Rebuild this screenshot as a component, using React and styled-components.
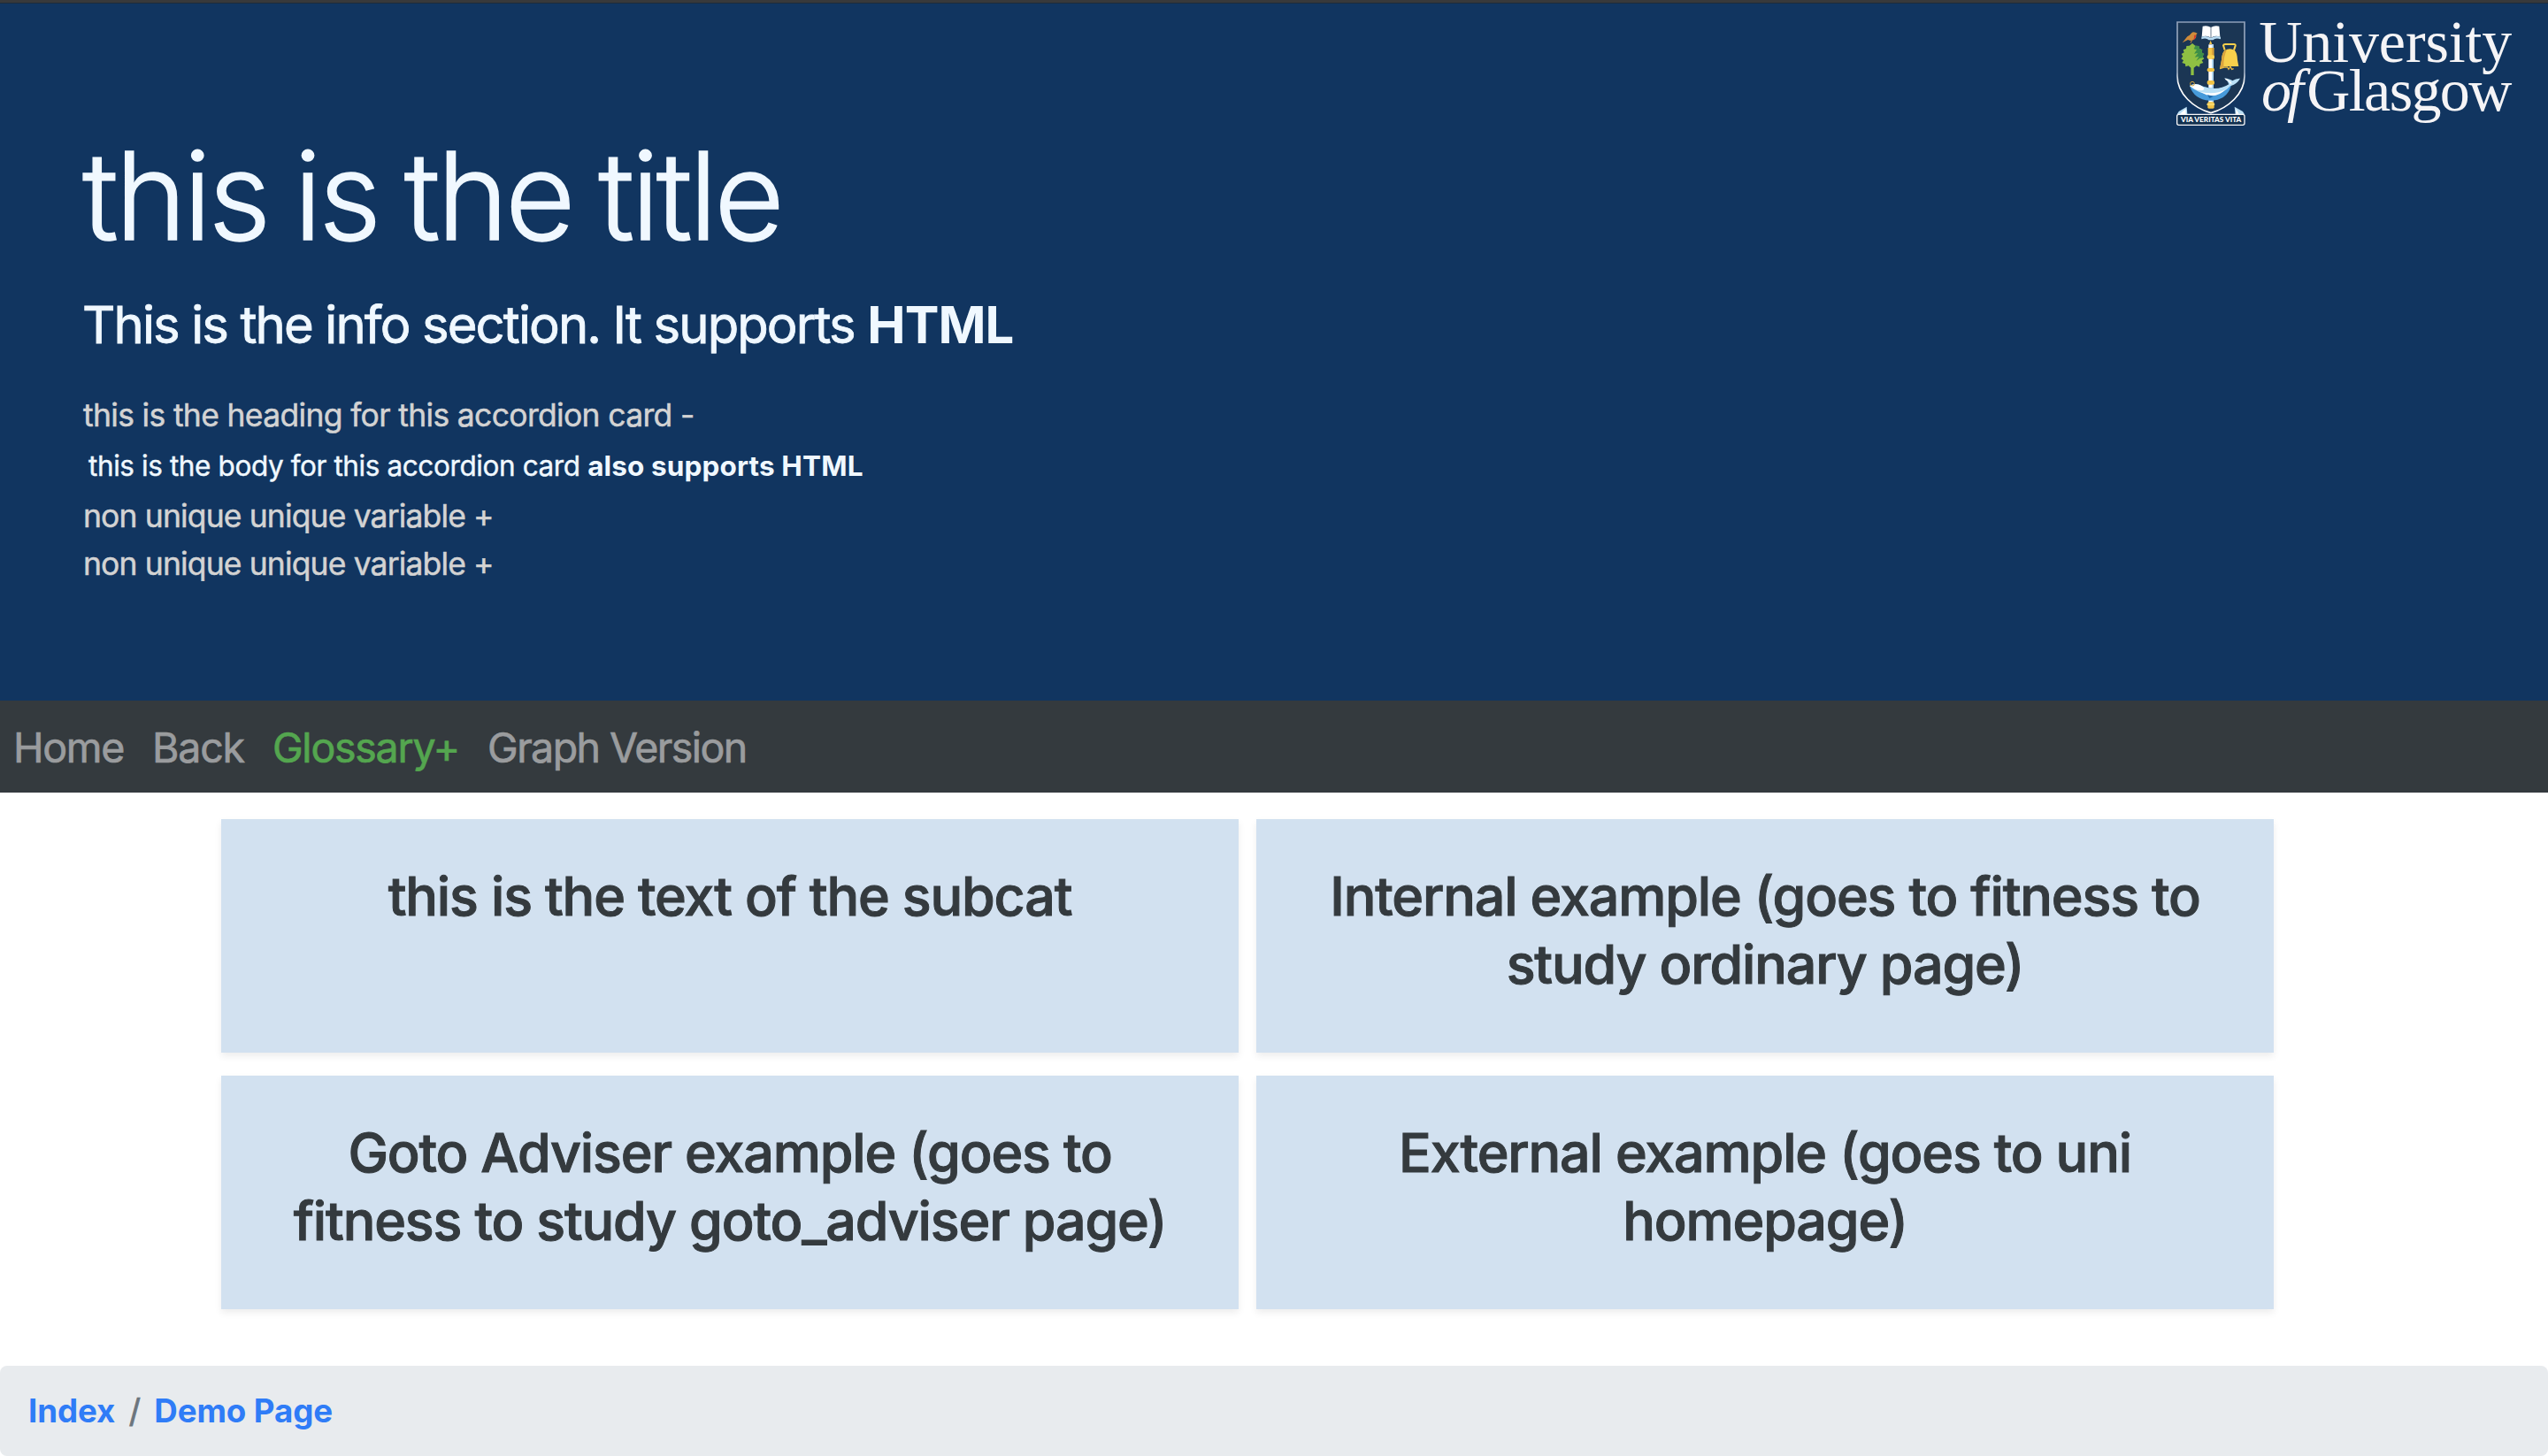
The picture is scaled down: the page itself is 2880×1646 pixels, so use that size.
import React from "react";
import styled, { createGlobalStyle } from "styled-components";

const GlobalStyle = createGlobalStyle`
  * { box-sizing: border-box; }
  body {
    margin: 0;
    background: #fff;
    font-family: Inter, "Liberation Sans", sans-serif;
    color: #343a3e;
  }
  h1, h2, p { margin: 0; }
`;

const Page = styled.div`
  display: flex;
  flex-direction: column;
  height: 1646px;
  overflow: hidden;
`;

const WindowEdge = styled.div`
  flex: none;
  height: 4px;
  background: #38393b;
  border-bottom: 1px solid #1e2b3a;
`;

const Header = styled.header`
  flex: none;
  display: flex;
  justify-content: space-between;
  align-items: flex-start;
  height: 788px;
  background: #113560;
  color: #f0f8ff;
`;

const Intro = styled.div`
  padding: 135px 0 0 93px;
`;

const Title = styled.h1`
  font-size: 137px;
  font-weight: 300;
  -webkit-text-stroke: 1.4px currentColor;
  line-height: 165px;
  letter-spacing: -3.65px;
  word-spacing: -5.5px;
`;

const Info = styled.p`
  margin-top: 24px;
  font-size: 58px;
  -webkit-text-stroke: 0.8px currentColor;
  line-height: 78px;
  letter-spacing: -1.9px;

  strong {
    letter-spacing: -0.9px;
    -webkit-text-stroke: 0;
  }
`;

const Accordion = styled.div`
  margin-top: 37px;
  padding-left: 1px;
`;

const CardHeading = styled.p`
  font-size: 35.5px;
  -webkit-text-stroke: 0.5px currentColor;
  line-height: 54px;
  letter-spacing: ${(p) => (p.$open ? "-0.67px" : "-0.86px")};
  color: #d3d3d3;
`;

const CardBody = styled.p`
  padding-left: 6px;
  font-size: 31.5px;
  -webkit-text-stroke: 0.4px currentColor;
  line-height: 60px;
  letter-spacing: -0.4px;

  strong {
    letter-spacing: 0.13px;
    -webkit-text-stroke: 0;
  }
`;

const LogoSvg = styled.svg`
  flex: none;
  width: 388px;
  height: 126px;
  margin: 16px 36px 0 0;
  overflow: visible;
`;

const Nav = styled.nav`
  flex: none;
  display: flex;
  height: 104px;
  padding: 1px 0 0 15px;
  gap: 32px;
  background: #343a3e;
  line-height: 104px;
  font-size: 46.5px;
`;

const NavLink = styled.span`
  color: ${(p) => (p.$accent ? "#54a64f" : "#9a9c9e")};
  -webkit-text-stroke: 0.7px currentColor;
  letter-spacing: ${(p) => p.$track}px;
`;

const Main = styled.main`
  flex: 1;
  display: grid;
  grid-template-columns: 1150px 1150px;
  grid-auto-rows: 264px;
  gap: 26px 20px;
  padding: 30px 0 0 250px;
`;

const Tile = styled.div`
  padding: 49px 64px 0;
  background: #d2e1f0;
  box-shadow: 0 4px 8px rgba(0, 0, 0, 0.075);
  text-align: center;
`;

const TileTitle = styled.h2`
  font-size: 61px;
  font-weight: 500;
  -webkit-text-stroke: 1px currentColor;
  line-height: 76.8px;
  letter-spacing: -1.15px;
`;

const Breadcrumb = styled.footer`
  flex: none;
  display: flex;
  gap: 15.5px;
  height: 102px;
  padding: 24px 32px;
  border-radius: 8px;
  background: #e8ebee;
  font-size: 36.7px;
  line-height: 54px;
  letter-spacing: -0.1px;
`;

const Crumb = styled.span`
  font-weight: 700;
  color: #2f7cf7;
`;

const Divider = styled.span`
  -webkit-text-stroke: 0.8px currentColor;
  color: #6c757d;
`;

function Logo() {
  return (
    <LogoSvg viewBox="48 60 1164 378" role="img" aria-label="University of Glasgow">
      <defs>
        <linearGradient id="rim" x1="0" y1="0" x2="0" y2="1">
          <stop offset="0" stopColor="#8e9fb8" />
          <stop offset="0.55" stopColor="#9aaabf" />
          <stop offset="0.68" stopColor="#fff" />
        </linearGradient>
      </defs>
      <path d="M63 75H291V258C291 318 236 366 177 383C118 366 63 318 63 258Z" fill="#1b3654" stroke="url(#rim)" strokeWidth="5" />

      {/* bird */}
      <path d="M80 145L97 124Q106 119 110 113Q116 106 125 110L131 113L127 118Q129 129 119 135L108 138L99 135Z" fill="#cf8b3a" />
      <path d="M120 119L126 119Q128 129 116 136Q122 127 120 119Z" fill="#d8392b" />
      <path d="M113 136L108 146" stroke="#cf8b3a" strokeWidth="3" />

      {/* tree */}
      <path d="M114 147L104 155L94 156L93 165L83 169L86 178L77 183L82 191L76 199L84 205L79 213L90 217L91 226L101 223L109 230V255H119V230L128 223L138 227L140 217L151 213L146 205L154 199L148 191L154 183L145 178L148 169L138 165L136 156L124 155Z" fill="#8fc043" />
      <path d="M119 166L124 155L136 156L138 165L148 169L145 178L154 183L148 191L152 196L139 198L127 207L136 192L122 194L133 180L120 182L129 169Z" fill="#3d8f48" />

      {/* staff */}
      <path d="M176 137L181 150H171Z" fill="#f2c345" />
      <rect x="169" y="151" width="17" height="205" fill="#fff" />
      <rect x="180" y="151" width="6" height="205" fill="#b5d8f0" />
      <rect x="167" y="162" width="20" height="38" fill="#f2c345" />
      <rect x="180" y="162" width="7" height="38" fill="#d9a23b" />
      <rect x="164" y="187" width="25" height="12" rx="5" fill="#f8d252" />
      <rect x="164" y="231" width="25" height="12" rx="5" fill="#f2c345" />
      <rect x="164" y="273" width="25" height="14" rx="5" fill="#f2c345" />
      <rect x="166" y="346" width="22" height="22" rx="4" fill="#f2c345" />
      <rect x="163" y="350" width="27" height="8" rx="4" fill="#f8d96b" />

      {/* book */}
      <path d="M149 89Q165 85 177 93Q189 85 205 89L208 125Q191 119 177 128Q163 119 146 125Z" fill="#fff" />
      <path d="M177 93V126" stroke="#1b3654" strokeWidth="2" />
      <path d="M145 125Q163 120 177 129Q191 120 210 125V133Q193 127 184 136H170Q161 127 145 133Z" fill="#b8dbf2" />

      {/* bell */}
      <path d="M224 170L219 154Q220 150 226 150H255Q261 150 260 155L255 170" fill="none" stroke="#f8d04c" strokeWidth="6" />
      <path d="M223 172Q240 160 257 170Q266 178 267 203L271 225H223L207 234L213 203Q214 180 223 172Z" fill="#f8d04c" />
      <path d="M223 172Q215 180 213 203L207 234L220 226Q220 190 231 169Z" fill="#dba43e" />
      <path d="M207 233L222 228H233L237 235L243 226L248 235L254 233" fill="none" stroke="#e8b944" strokeWidth="4" />

      {/* fish */}
      <path d="M105 291Q126 278 150 293Q205 310 237 287L246 290Q230 342 172 341Q120 338 105 291Z" fill="#479bdb" />
      <path d="M105 291Q126 278 150 293Q200 310 238 286L243 291Q222 318 178 320Q136 320 105 291Z" fill="#b9e0f6" />
      <path d="M105 291Q126 280 146 292Q160 301 150 306Q128 310 105 291ZM140 311Q190 324 226 304Q200 332 162 322Z" fill="#fff" />
      <path d="M237 291Q240 280 222 265Q242 268 250 274Q262 265 276 266Q266 284 245 291Z" fill="#b9e0f6" />
      <path d="M226 268Q240 272 246 284" fill="none" stroke="#fff" strokeWidth="4" />
      <path d="M165 322L186 326L172 334Z" fill="#1f6cae" />
      <circle cx="114" cy="284" r="7" fill="none" stroke="#d6a53c" strokeWidth="3" />

      {/* motto */}
      <path d="M62 388L68 378L95 362L97 388ZM257 362L285 378L291 388H260Z" fill="#b9ddf3" />
      <path d="M72 386L92 368V388ZM262 368L272 386H262Z" fill="#fff" />
      <rect x="62" y="388" width="229" height="36" rx="6" fill="#12304f" stroke="#f7f7f9" strokeWidth="4" />
      <text x="75" y="415" fontFamily="Lato, sans-serif" fontWeight="900" fontSize="22" textLength="205" lengthAdjust="spacingAndGlyphs" fill="#fff">
        VIA VERITAS VITA
      </text>

      <g fill="#f5f4f6" fontFamily='"Liberation Serif", serif'>
        <text x="340" y="210" fontSize="204" textLength="858">University</text>
        <text x="348" y="375" fontSize="204" fontStyle="italic" textLength="144">of</text>
        <text x="502" y="375" fontSize="204" textLength="696">Glasgow</text>
      </g>
    </LogoSvg>
  );
}

const links = [
  { label: "Home", track: -1.3 },
  { label: "Back", track: -1.2 },
  { label: "Glossary+", track: -1.25, accent: true },
  { label: "Graph Version", track: -1.55 },
];

const tiles = [
  "this is the text of the subcat",
  "Internal example (goes to fitness to study ordinary page)",
  "Goto Adviser example (goes to fitness to study goto_adviser page)",
  "External example (goes to uni homepage)",
];

export default function App() {
  return (
    <Page>
      <GlobalStyle />
      <WindowEdge />
      <Header>
        <Intro>
          <Title>this is the title</Title>
          <Info>
            This is the info section. It supports <strong>HTML</strong>
          </Info>
          <Accordion>
            <CardHeading $open>this is the heading for this accordion card -</CardHeading>
            <CardBody>
              this is the body for this accordion card <strong>also supports HTML</strong>
            </CardBody>
            <CardHeading>non unique unique variable +</CardHeading>
            <CardHeading>non unique unique variable +</CardHeading>
          </Accordion>
        </Intro>
        <Logo />
      </Header>
      <Nav>
        {links.map((l) => (
          <NavLink key={l.label} $track={l.track} $accent={l.accent}>
            {l.label}
          </NavLink>
        ))}
      </Nav>
      <Main>
        {tiles.map((t) => (
          <Tile key={t}>
            <TileTitle>{t}</TileTitle>
          </Tile>
        ))}
      </Main>
      <Breadcrumb>
        <Crumb>Index</Crumb>
        <Divider>/</Divider>
        <Crumb>Demo Page</Crumb>
      </Breadcrumb>
    </Page>
  );
}
